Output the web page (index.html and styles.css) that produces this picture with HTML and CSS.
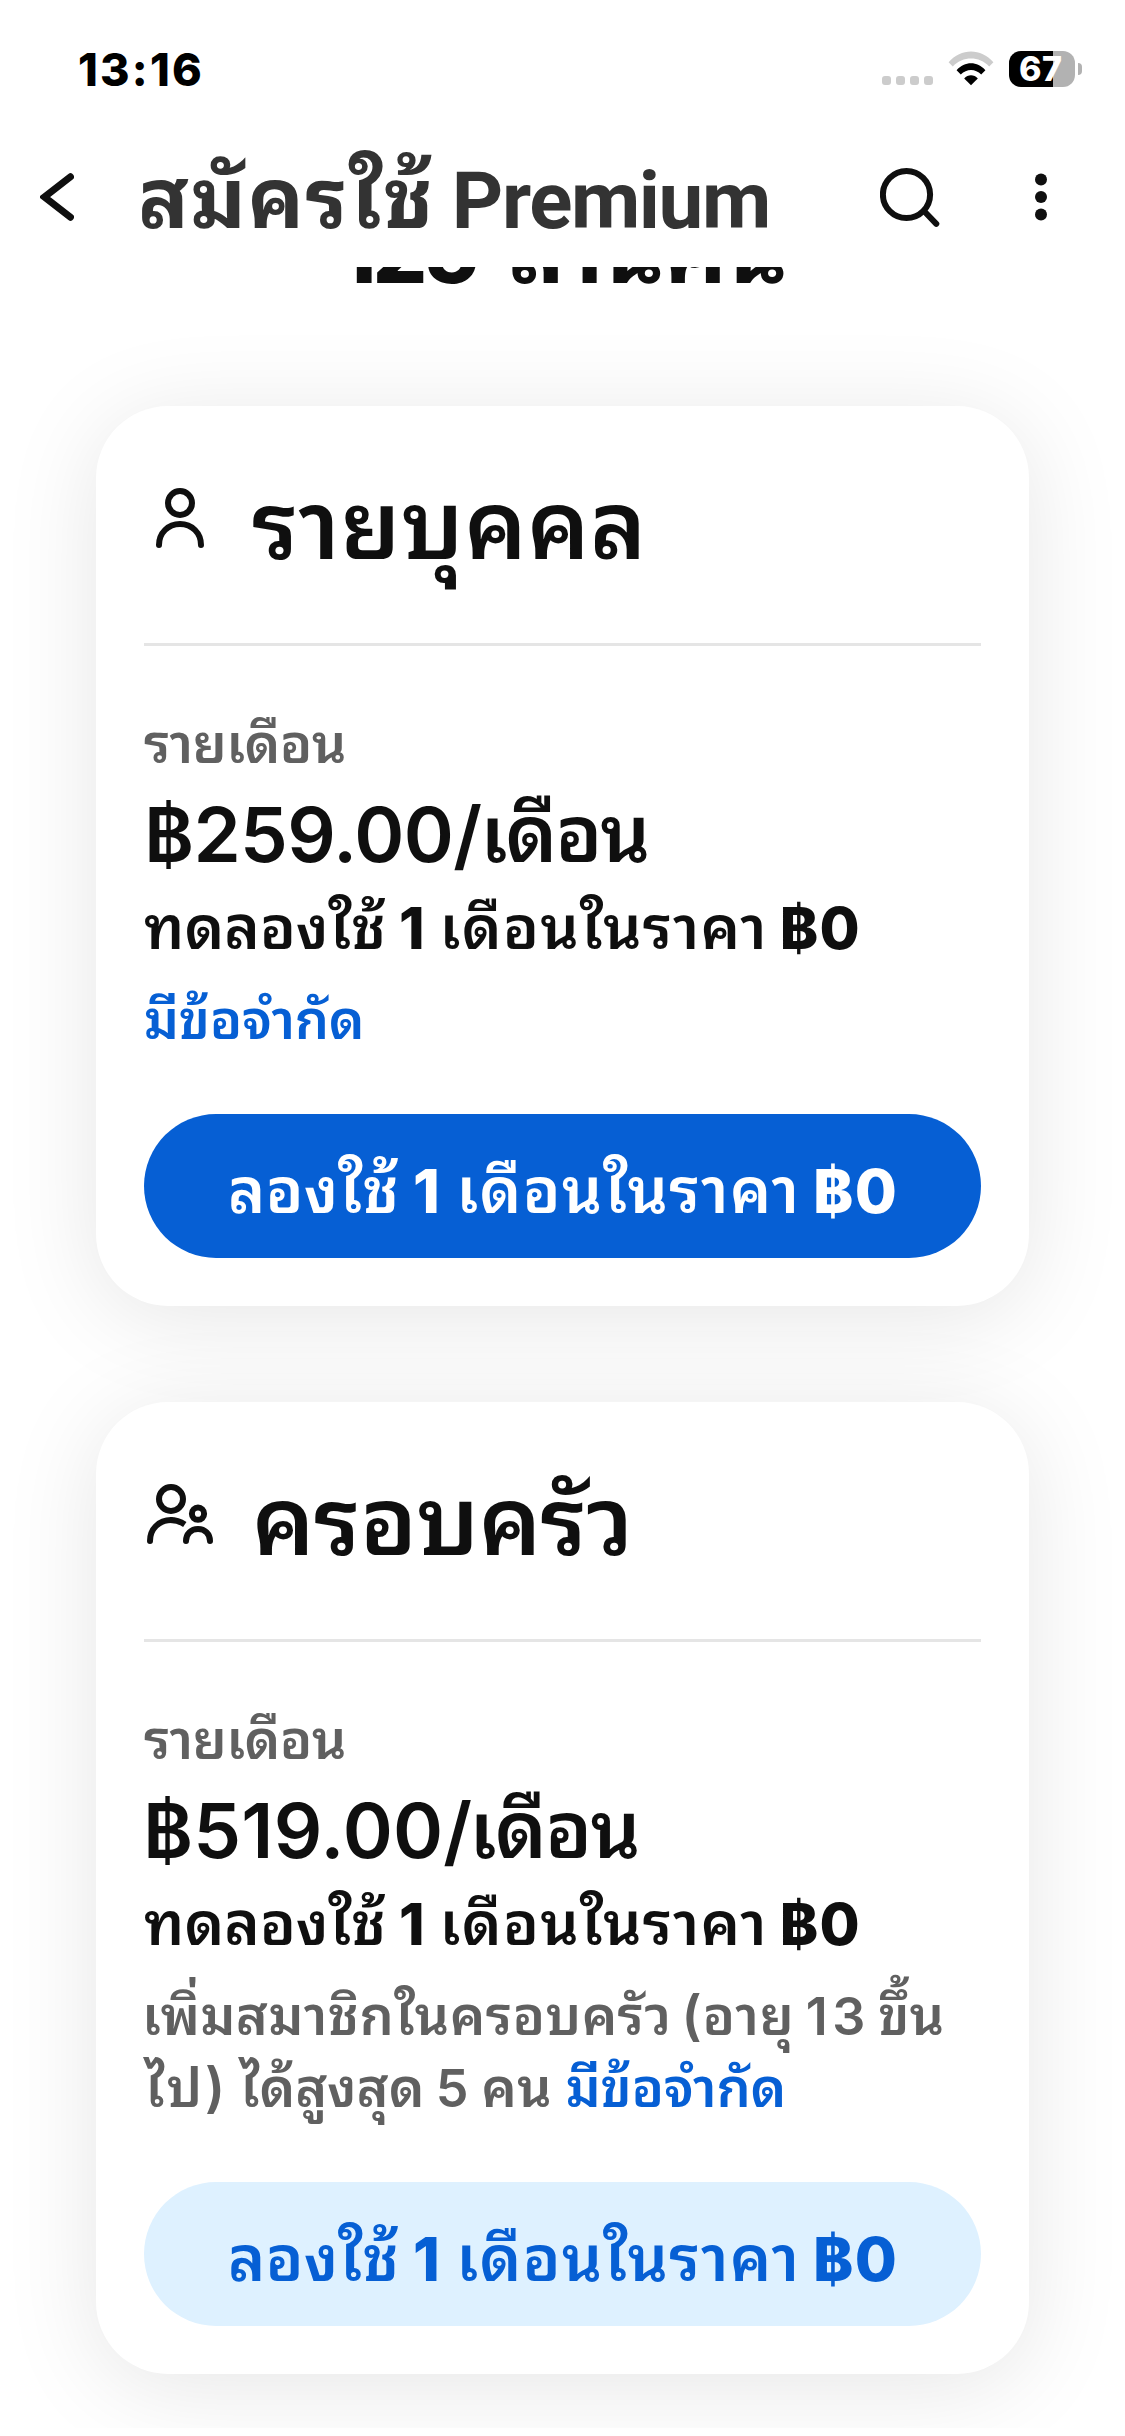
FILE: index.html
```html
<!DOCTYPE html>
<html lang="th">
<head>
<meta charset="utf-8">
<title>สมัครใช้ Premium</title>
<link rel="stylesheet" href="styles.css">
</head>
<body>
<header class="top">
  <div class="status">
    <span class="time">13:16</span>
    <div class="indicators">
      <span class="cell"><i></i><i></i><i></i><i></i></span>
      <svg class="wifi" viewBox="0 0 46 36">
        <path d="M0.6 11.2C13-3 33-3 45.4 11.2L41.2 15.4C31 4.8 15 4.8 4.8 15.4Z" fill="#ccc"/>
        <path d="M8.6 19.2C16.6 10 29.4 10 37.4 19.2L33.2 23.4C27.4 17.4 18.6 17.4 12.8 23.4Z"/>
        <path d="M16.2 27.4C20 23.2 26 23.2 29.8 27.4L23 34.2Z"/>
      </svg>
      <span class="battery"><span class="level">67</span></span>
    </div>
  </div>
  <nav class="nav">
    <svg class="back" viewBox="0 0 34 48"><path d="M30.5 3.8 4.5 24 30.5 44.2"/></svg>
    <h1 class="title">สมัครใช้ <span class="latin">Premium</span></h1>
    <svg class="search" viewBox="0 0 60 60"><circle cx="26.5" cy="27.5" r="23.6"/><path d="M44 44 56.3 56.8"/></svg>
    <svg class="more" viewBox="0 0 12 48"><circle cx="6" cy="6.4" r="6"/><circle cx="6" cy="24" r="6"/><circle cx="6" cy="41.6" r="6"/></svg>
  </nav>
</header>
<main class="page">
  <p class="hero"><span class="count">125</span> ล้านคน</p>
  <section class="card">
    <div class="head">
      <svg class="icon" viewBox="0 0 72 72"><circle cx="36" cy="23" r="12"/><path d="M15 65C15 53 24 44 36 44S57 53 57 65"/></svg>
      <h2 class="name single">รายบุคคล</h2>
    </div>
    <p class="label">รายเดือน</p>
    <p class="price"><span class="amount">฿259.00/</span><span class="unit">เดือน</span></p>
    <p class="offer">ทดลองใช้ <b>1</b> <span class="term">เดือนในราคา</span> <b class="zero">฿0</b></p>
    <p class="note"><a class="link">มีข้อจำกัด</a></p>
    <a class="button primary">ลองใช้ <b>1</b> <span class="term">เดือนในราคา</span> <b class="zero">฿0</b></a>
  </section>
  <section class="card">
    <div class="head">
      <svg class="icon" viewBox="0 0 72 72"><circle cx="27" cy="23" r="12"/><path d="M6 65C6 53 15 44 27 44"/><path class="cut" d="M26 44C32 44 36.5 45.5 40.8 48.4"/><circle cx="54" cy="37.7" r="6.1"/><path d="M42 65C42 58 47 53 54 53S66 58 66 65"/></svg>
      <h2 class="name family">ครอบครัว</h2>
    </div>
    <p class="label">รายเดือน</p>
    <p class="price"><span class="amount second">฿519.00/</span><span class="unit">เดือน</span></p>
    <p class="offer">ทดลองใช้ <b>1</b> <span class="term">เดือนในราคา</span> <b class="zero">฿0</b></p>
    <p class="note"><span class="members">เพิ่มสมาชิกในครอบครัว</span> <span class="age">(อายุ</span> <span class="num">13</span> ขึ้น<br><span class="go">ไป)</span> <span class="max">ได้สูงสุด</span> <span class="num">5</span> คน <a class="link">มีข้อจำกัด</a></p>
    <a class="button tonal">ลองใช้ <b>1</b> <span class="term">เดือนในราคา</span> <b class="zero">฿0</b></a>
  </section>
</main>
</body>
</html>
```
FILE: styles.css
```css
* { box-sizing: border-box; }
body {
  margin: 0;
  background: #fff;
  color: #0f0f0f;
  font-family: "Noto Sans Thai Looped", Loma, "Noto Sans", sans-serif;
}
h1, h2, p { margin: 0; }
b, .num, .amount, .age, .go, .count, .time, .level { font-family: Inter, "Noto Sans Thai Looped", Loma, sans-serif; line-height: 1; }

.top { position: relative; z-index: 1; height: 267px; background: #fff; }
.status { display: flex; align-items: center; justify-content: space-between; height: 130px; padding: 8px 43px 0 78px; }
.time { font-size: 45px; font-weight: 800; letter-spacing: 2.2px; color: #000; }
.indicators { display: flex; align-items: center; }
.cell { display: flex; gap: 5px; margin: 23px 15px 0 0; }
.cell i { width: 9px; height: 9px; border-radius: 3px; background: #ccc; }
.wifi { width: 46px; height: 36px; margin-right: 15px; }
.battery { display: flex; align-items: center; }
.battery::after { content: ""; width: 4px; height: 12px; margin-left: 3px; border-radius: 0 6px 6px 0; background: #b2b2b2; }
.level { width: 66px; height: 36px; padding-left: 10px; border-radius: 12px; background: linear-gradient(90deg, #000 44px, #b2b2b2 44px); color: #fff; font-size: 34px; font-weight: 800; line-height: 36px; letter-spacing: .5px; }

.nav { display: flex; align-items: center; height: 137px; padding: 0 78px 3px 40px; }
.nav svg { fill: none; stroke: #0f0f0f; flex: none; }
.back { width: 34px; height: 48px; stroke-width: 7px; stroke-linecap: round; }
.title { flex: 1; margin: 0 0 14px 64px; color: #333; font-size: 84px; font-weight: 700; line-height: 120px; letter-spacing: 1.6px; white-space: nowrap; }
.latin { font-family: Roboto, sans-serif; font-size: 80px; line-height: 1; letter-spacing: -1.4px; margin-left: -6px; }
.search { width: 60px; height: 60px; stroke-width: 6px; stroke-linecap: round; margin-right: 95px; }
.nav .more { width: 12px; height: 48px; fill: #0f0f0f; stroke: none; }

.page { display: flow-root; height: 2161px; padding: 0 96px; overflow: clip; }
.hero { margin: -87px 0 106px; text-align: center; font-size: 95px; font-weight: 700; line-height: 120px; letter-spacing: -1.4px; white-space: nowrap; }
.count { font-size: 86px; font-weight: 800; letter-spacing: -4px; margin-right: 9px; }

.card { margin-bottom: 96px; padding: 48px; border-radius: 72px; background: #fff; box-shadow: 0 12px 96px rgba(0, 0, 0, .1); white-space: nowrap; }
.head { display: flex; height: 192px; padding-top: 2px; margin-bottom: 57px; border-bottom: 3px solid #e5e5e5; }
.icon { width: 72px; height: 72px; margin-top: 24px; flex: none; fill: none; stroke: #0f0f0f; stroke-width: 6px; stroke-linecap: round; }
.cut { stroke-linecap: butt; }
.name { margin-left: 36px; font-size: 95px; font-weight: 600; line-height: 120px; }
.single { letter-spacing: .39px; }
.family { letter-spacing: -.59px; }
.label { color: #606060; font-size: 54px; font-weight: 600; line-height: 72px; letter-spacing: -.6px; }
.price { margin-top: 4px; font-size: 78px; font-weight: 600; line-height: 96px; }
.amount { font-size: 76px; letter-spacing: -.7px; }
.second { letter-spacing: .2px; margin-left: -1px; }
.unit { margin-left: -1.2px; letter-spacing: -2px; }
.second + .unit { margin-left: -3.1px; letter-spacing: -1.6px; }
.offer { margin-top: 5px; font-size: 60px; font-weight: 600; line-height: 84px; word-spacing: -2.6px; }
b { font-size: .967em; font-weight: 800; }
.term { margin-left: 2px; letter-spacing: 1.2px; }
.zero { margin-left: -1px; letter-spacing: 1.2px; }
.note { margin-top: 15px; color: #606060; font-size: 54px; font-weight: 600; line-height: 72px; }
.link { color: #065fd4; letter-spacing: -.3px; }
.members { margin-left: -2px; letter-spacing: .45px; }
.age { margin-left: -4px; letter-spacing: .8px; }
.num { font-size: 52px; font-weight: 600; letter-spacing: 4.5px; margin: 0 -5.5px 0 -3px; }
.go { margin-left: 1px; letter-spacing: 2.8px; }
.max { margin-left: -2px; letter-spacing: 0; }
.button { display: block; height: 144px; margin-top: 63px; padding-left: 1px; border-radius: 72px; font-size: 63px; font-weight: 600; line-height: 142px; text-align: center; letter-spacing: .3px; word-spacing: -2.8px; }
.primary { background: #065fd4; color: #fff; }
.tonal { background: #def1ff; color: #065fd4; }
```
